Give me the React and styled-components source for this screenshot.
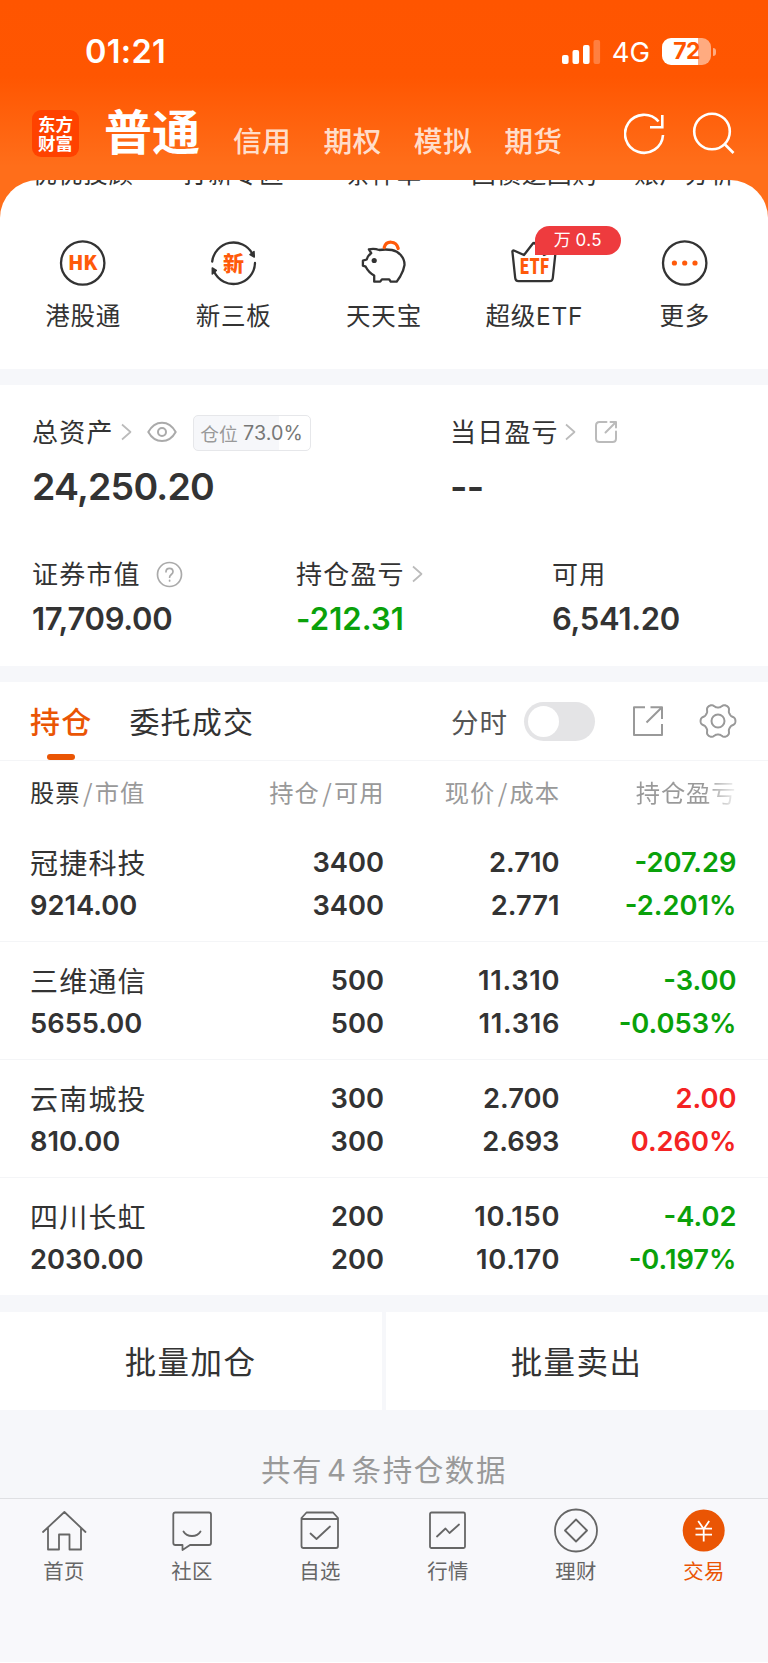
import React from "react";
import styled, { createGlobalStyle } from "styled-components";

const cjk = `"Noto Sans CJK SC", sans-serif`;

const GlobalStyle = createGlobalStyle`
  *, *::before, *::after { box-sizing: border-box; }
  html, body { margin: 0; padding: 0; background: #fff; }
  body { font-family: Inter, ${cjk}; color: #333; }
`;

const Screen = styled.div`
  width: 768px;
  height: 1663px;
  display: flex;
  flex-direction: column;
  overflow: hidden;
  background: #f6f7fa;
  white-space: nowrap;
`;

/* ---------- header ---------- */

const Header = styled.header`
  height: 222px;
  flex: none;
  background: linear-gradient(180deg, #ff5500 0, #ff5601 76px, #ff6e1a 166px);
`;

const StatusBar = styled.div`
  height: 103px;
  padding: 0 57px 0 85px;
  display: flex;
  align-items: center;
  color: #fff;
`;

const Clock = styled.span`
  flex: 1;
  font-size: 32.5px;
  font-weight: 600;
  letter-spacing: 0.3px;
`;

const Network = styled.span`
  margin: 0 12px 0 11px;
  font-size: 27.5px;
`;

const Battery = styled.div`
  position: relative;
  width: 49px;
  height: 27px;
  border-radius: 9px;
  background: linear-gradient(90deg, #fff 36px, #ffab80 36px);
  color: #ff5500;
  font-size: 23px;
  font-weight: 700;
  line-height: 27px;
  text-align: center;
  letter-spacing: -0.8px;

  &::after {
    content: "";
    position: absolute;
    right: -5px;
    top: 10px;
    width: 3px;
    height: 8px;
    border-radius: 0 3px 3px 0;
    background: #ffab80;
  }
`;

const NavRow = styled.div`
  height: 77px;
  padding: 0 32px;
  display: flex;
`;

const Logo = styled.div`
  width: 47px;
  height: 47px;
  margin: 7px 25px 0 0;
  padding-top: 3.5px;
  border-radius: 9px;
  background: #ff4200;
  color: #fff;
  font: 700 17.5px/19.5px ${cjk};
  text-align: center;
`;

const MainTab = styled.h1`
  margin: 0 33px 0 0;
  color: #fff;
  font: 700 48px/53px ${cjk};
`;

const SubTab = styled.span`
  width: 90.4px;
  padding-top: 16.5px;
  color: rgba(255, 255, 255, 0.8);
  font: 500 28.8px/40px ${cjk};
  letter-spacing: 0.3px;
`;

const HeaderIcons = styled.div`
  margin-left: auto;
  padding-top: 7px;
  display: flex;
  gap: 24px;
  color: #fff;
`;

/* ---------- shortcuts ---------- */

const Shortcuts = styled.section`
  flex: none;
  height: 189px;
  margin-top: -42px;
  border-radius: 38px 38px 0 0;
  overflow: hidden;
  background: #fff;
`;

const ShortcutGrid = styled.div`
  display: grid;
  grid-template-columns: repeat(5, 150.4px);
  justify-content: center;
  justify-items: center;
`;

const ClippedGrid = styled(ShortcutGrid)`
  height: 32px;
  margin-top: -22px;
`;

const ShortcutLabel = styled.span`
  font: 400 24.5px/32px Inter, ${cjk};
  letter-spacing: 0.8px;
`;

const Shortcut = styled.div`
  position: relative;
  width: 100%;
  padding-top: 49px;
  display: flex;
  flex-direction: column;
  align-items: center;
  gap: 13px;
`;

const PromoTag = styled.span`
  position: absolute;
  left: 75.5px;
  top: 35.5px;
  width: 86.5px;
  height: 29.5px;
  border-radius: 15px 15px 15px 0;
  background: #ee3b3e;
  color: #fff;
  font: 400 17px/29px Inter, ${cjk};
  letter-spacing: 0.5px;
  word-spacing: -1px;
  text-align: center;
`;

/* ---------- assets ---------- */

const Assets = styled.section`
  flex: none;
  height: 281px;
  margin-top: 16px;
  background: #fff;
`;

const AssetRow = styled.div`
  display: grid;
  grid-template-columns: ${(p) => p.$cols};
  padding-left: 32px;
  padding-top: ${(p) => p.$top};
`;

const AssetLabel = styled.div`
  height: 38px;
  display: flex;
  align-items: center;
  font: 400 26px/36px ${cjk};
  letter-spacing: 1.2px;
`;

const LabelText = styled.span`
  height: 38px;
`;

const AssetValue = styled.div`
  font: 600 ${(p) => (p.$large ? "37.5px/46px" : "31px/46px")} Inter, sans-serif;
  letter-spacing: ${(p) => (p.$large ? "-0.8px" : p.$down ? "0.1px" : "-0.3px")};
  margin-top: ${(p) => (p.$large ? "13px" : "2.5px")};
  color: ${(p) => (p.$down ? "#0aa10a" : "#333")};
`;

const PositionTag = styled.div`
  width: 118px;
  height: 36px;
  margin: 1px 0 0 16px;
  border: 1.5px solid #e6e7ea;
  border-radius: 5px;
  background: linear-gradient(90deg, #f6f7fa 85px, #fff 85px);
  display: flex;
  align-items: center;
  justify-content: center;
  gap: 5px;
  font: 400 18.7px/32px ${cjk};
  letter-spacing: 0.2px;
  color: #999;
`;

const PositionValue = styled.span`
  padding-top: 1px;
  font: 400 19.7px/34px Inter, sans-serif;
  letter-spacing: 0.1px;
  color: #777;
`;

/* ---------- holdings ---------- */

const Holdings = styled.section`
  flex: none;
  height: 613px;
  margin-top: 16px;
  background: #fff;
`;

const TabRow = styled.div`
  height: 79px;
  padding: 0 31px 0 30px;
  border-bottom: 1.5px solid #f4f5f7;
  display: flex;
  align-items: center;
`;

const Tab = styled.span`
  position: relative;
  height: 79px;
  margin-right: 37px;
  font: ${(p) => (p.$active ? 500 : 400)} 30px/76px ${cjk};
  letter-spacing: 1.2px;
  color: ${(p) => (p.$active ? "#ea5504" : "#333")};

  &::after {
    content: "";
    display: ${(p) => (p.$active ? "block" : "none")};
    position: absolute;
    left: 17px;
    bottom: 0.5px;
    width: 27.5px;
    height: 6px;
    border-radius: 3px;
    background: #ea5504;
  }
`;

const ToggleLabel = styled.span`
  margin-left: auto;
  font: 400 27.5px/78px ${cjk};
  letter-spacing: 1px;
  color: #555;
`;

const Toggle = styled.span`
  width: 71px;
  height: 39px;
  margin: 0 37.5px 0 15.5px;
  padding: 4px;
  border-radius: 20px;
  background: #e4e4e6;

  &::before {
    content: "";
    display: block;
    width: 31px;
    height: 31px;
    border-radius: 50%;
    background: #fff;
  }
`;

const tableColumns = "190px 164px 175.5px 176.5px";

const TableHead = styled.div`
  height: 63px;
  padding-left: 30px;
  display: grid;
  grid-template-columns: ${tableColumns};
  font: 400 24.3px/61.5px ${cjk};
  color: #999;
`;

const HeadCell = styled.div`
  letter-spacing: 0.9px;
  margin-right: -0.5px;
  text-align: ${(p) => (p.$left ? "left" : "right")};
`;

const FadedText = styled.span`
  background: linear-gradient(90deg, #999 68%, #f4f4f4 100%);
  -webkit-background-clip: text;
  background-clip: text;
  color: transparent;
`;

const Strong = styled.b`
  font-weight: 400;
  color: #333;
`;

const Slash = styled.span`
  margin: 0 1.5px 0 2.5px;
`;

const StockRow = styled.div`
  height: ${(p) => (p.$last ? "117px" : "118px")};
  padding: 18px 0 0 30px;
  border-bottom: ${(p) => (p.$last ? "0" : "1.5px solid #f4f5f7")};
  display: grid;
  grid-template-columns: ${tableColumns};
  grid-auto-rows: 42.5px;
  font: 600 27.3px/42.5px Inter, sans-serif;
`;

const StockName = styled.span`
  font: 400 28px/41px ${cjk};
  letter-spacing: 1.2px;
`;

const Num = styled.span`
  text-align: ${(p) => (p.$left ? "left" : "right")};
  letter-spacing: ${(p) => (p.$loose ? "0.7px" : "0")};
  margin-right: ${(p) => (p.$loose ? "-0.7px" : p.$tone ? "-0.5px" : "0")};
  color: ${(p) => (p.$tone === "down" ? "#0aa10a" : p.$tone === "up" ? "#f42323" : "#333")};
`;

/* ---------- footer ---------- */

const BatchActions = styled.div`
  flex: none;
  margin-top: 17px;
  display: grid;
  grid-template-columns: 1fr 1fr;
  gap: 4px;
`;

const BatchButton = styled.button`
  height: 98px;
  padding: 0 1px 2px 0;
  border: 0;
  background: #fff;
  color: #333;
  font: 400 31.5px/96px ${cjk};
  letter-spacing: 1.4px;
`;

const Summary = styled.p`
  flex: none;
  height: 88px;
  margin: 0;
  padding-top: 38.5px;
  font: 400 29.5px/42px Inter, ${cjk};
  letter-spacing: 1.6px;
  word-spacing: -6px;
  color: #999;
  text-align: center;
`;

const TabBar = styled.nav`
  flex: 1;
  border-top: 1.5px solid #dfe0e3;
  border-bottom: 1px solid #fff;
  background: #f8f8fb;
  display: grid;
  grid-template-columns: repeat(6, 1fr);
`;

const TabBarItem = styled.div`
  padding-top: 7px;
  display: flex;
  flex-direction: column;
  align-items: center;
  color: ${(p) => (p.$active ? "#ea5504" : "#666")};
  font: 400 20.4px/31px ${cjk};
  letter-spacing: 0.4px;
`;

const Glyph = styled.svg`
  display: block;
  flex: none;
  fill: none;
  stroke: ${(p) => p.$color || "currentColor"};
  stroke-width: ${(p) => p.$weight || 2};
  stroke-linejoin: round;
  stroke-linecap: ${(p) => p.$cap || "round"};
  margin-left: ${(p) => p.$ml || 0};
`;

const IconText = styled.text`
  font-family: ${cjk};
  font-weight: 900;
  fill: #ff5a0a;
  stroke: none;
  text-anchor: middle;
`;

/* ---------- icons ---------- */

const Signal = () => (
  <svg width="39" height="24" viewBox="0 0 39 24" fill="#fff">
    <rect x="0" y="15" width="6.6" height="9" rx="2" />
    <rect x="10.5" y="10" width="6.6" height="14" rx="2" />
    <rect x="21" y="5" width="6.6" height="19" rx="2" />
    <rect x="31.5" y="0" width="6.6" height="24" rx="2" opacity=".25" />
  </svg>
);

const Refresh = () => (
  <Glyph width="44" height="46" viewBox="0 0 44 46" $weight={2.6} $cap="butt">
    <path d="M39 25A19 19 0 1 1 34.5 11.500" />
    <path d="M38.300 5v12.200H26" strokeLinejoin="miter" />
  </Glyph>
);

const Search = () => (
  <Glyph width="44" height="46" viewBox="0 0 44 46" $weight={2.6} $cap="butt">
    <circle cx="20" cy="21.5" r="17.8" />
    <path d="M32.5 34l9 9" />
  </Glyph>
);

const Chevron = ({ ml }) => (
  <Glyph width="11" height="18" viewBox="0 0 11 18" $color="#bbb" $weight={1.7} $cap="butt" $ml={ml}>
    <path d="M1 1.5l8.5 7.5L1 16.5" />
  </Glyph>
);

const Eye = () => (
  <Glyph width="30" height="22" viewBox="0 0 30 22" $color="#aaa" $ml="15px">
    <path d="M1.3 11C8 -1.5 22 -1.5 28.7 11C22 23 8 23 1.3 11Z" />
    <circle cx="15" cy="11" r="4" />
  </Glyph>
);

const Question = () => (
  <Glyph width="27" height="27" viewBox="0 0 27 27" $color="#aaa" $weight={1.7} $ml="15px">
    <circle cx="13.5" cy="13.5" r="12" />
    <path d="M10 10.8c0-4.6 7-4.6 7 0c0 2.6-3.4 2.8-3.4 5.4" />
    <path d="M13.6 19.3v.6" />
  </Glyph>
);

const ShareSmall = () => (
  <Glyph width="24" height="24" viewBox="0 0 24 24" $color="#bbb" $ml="17.5px">
    <path d="M12.5 2H5.5Q2 2 2 5.5V18.5Q2 22 5.5 22H18.5Q22 22 22 18.5V11.5" />
    <path d="M11.5 12.5L22 2M16.5 2H22V7.5" />
  </Glyph>
);

const ShareSquare = () => (
  <Glyph width="32" height="32" viewBox="0 0 32 32" $color="#999" $cap="butt">
    <path d="M13 2.2H2V30H30V19M18.5 2.2H30V14M30 2.2L14.5 17.5" />
  </Glyph>
);

const gearOutline = Array.from({ length: 120 }, (_, i) => {
  const t = (i / 120) * Math.PI * 2;
  const r = 15.5 + 2.1 * Math.tanh(1.5 * Math.cos(6 * t));
  return `${(19 + r * Math.cos(t)).toFixed(2)},${(19 + r * Math.sin(t)).toFixed(2)}`;
}).join(" ");

const Gear = () => (
  <Glyph width="38" height="38" viewBox="0 0 38 38" $color="#999" $ml="35px">
    <polygon points={gearOutline} />
    <circle cx="19" cy="19" r="6.5" />
  </Glyph>
);

const shortcutIcons = {
  hk: (
    <>
      <circle cx="23.7" cy="24" r="21.7" />
      <IconText x="23.7" y="31" fontSize="20">HK</IconText>
    </>
  ),
  board: (
    <>
      <path d="M2.2 22.5A21.5 21.5 0 0 1 42.3 14.5M45 24A21.5 21.5 0 0 1 4 32.5" />
      <path d="M44 12.500L44.300 18L40 15.500Z M2.300 35L2.300 29L6.300 31.500Z" fill="#333" strokeWidth="1.5" />
      <IconText x="23.5" y="31.500" fontSize="21">新</IconText>
    </>
  ),
  pig: (
    <g transform="translate(-0.8 0)">
      <path d="M9.7 10.3Q15 9 20 11Q26 10 32.7 11Q38 12 41.5 16Q45.5 20.5 45.3 26Q44.5 31.5 41 37.5L37.5 42.7H31.5L30 40.3H22.7L21 42.7H15V36.5Q9.5 33.5 6.5 27.7L3.7 26.7V21.7L7.5 20.5Q8.5 16.5 12 14.2Z" />
      <path d="M25 8.5C27 1.3 37 1.3 39 9.5" stroke="#ff5a0a" strokeWidth="3.2" />
      <circle cx="15" cy="21.5" r="2.6" fill="#333" stroke="none" />
    </g>
  ),
  etf: (
    <>
      <path d="M2.5 13.5Q1.8 10.5 5 12L14 16L22.5 5Q24 3 25.5 5L34 16L43 12Q46.2 10.5 45.5 13.5L42.8 39Q42.5 42.2 39.5 42.2H8.5Q5.5 42.2 5.2 39Z" />
      <IconText x="24.5" y="35" fontSize="20.5" textLength="30" lengthAdjust="spacingAndGlyphs">ETF</IconText>
    </>
  ),
  more: (
    <>
      <circle cx="23.7" cy="24" r="21.7" />
      <g fill="#ff5a0a" stroke="none">
        <circle cx="13.4" cy="24" r="2.6" />
        <circle cx="23.7" cy="24" r="2.6" />
        <circle cx="34" cy="24" r="2.6" />
      </g>
    </>
  ),
};

const tabBarIcons = {
  home: <path d="M3 26L24.4 6L45.5 26M8 22V43.5H19V28.5H29.5V43.5H41V22" />,
  chat: (
    <>
      <path d="M7.3 6.5H41Q43 6.5 43 8.5V37Q43 39 41 39H22L14.5 44V39H7.3Q5.3 39 5.3 37V8.5Q5.3 6.5 7.3 6.5Z" />
      <path d="M15.5 25.5C19 31.5 29 31.5 32.5 25.5" />
    </>
  ),
  pick: (
    <>
      <path d="M5.5 13H42V40Q42 42 40 42H7.5Q5.5 42 5.5 40V12L10.5 6.5H37L42 12V14" />
      <path d="M14.5 27.5L20.5 33L34 20.5" />
    </>
  ),
  quote: (
    <>
      <rect x="6" y="6.5" width="35" height="35.5" rx="1.5" />
      <path d="M13 30.5L21.5 22.5L25.5 27L35 18.5" />
    </>
  ),
  wealth: (
    <>
      <circle cx="24" cy="24.5" r="21" />
      <path d="M24 13.5L35 24.5L24 35.5L13 24.5Z" />
    </>
  ),
  trade: (
    <>
      <circle cx="23.7" cy="24.5" r="21" fill="#ea5504" stroke="none" />
      <path d="M18.2 15L23.7 23L29.2 15M23.7 22.5V35.5M15.5 22.7H32M15.5 28.7H32" stroke="#fff" strokeLinecap="butt" />
    </>
  ),
};

/* ---------- data ---------- */

const clippedLabels = ["优优投顾", "打新专区", "条件单", "国债逆回购", "账户分析"];

const shortcuts = [
  { icon: "hk", label: "港股通" },
  { icon: "board", label: "新三板" },
  { icon: "pig", label: "天天宝" },
  { icon: "etf", label: "超级ETF", tag: "万 0.5" },
  { icon: "more", label: "更多" },
];

const stocks = [
  { name: "冠捷科技", value: "9214.00", held: "3400", free: "3400", price: "2.710", cost: "2.771", pl: "-207.29", rate: "-2.201%", tone: "down" },
  { name: "三维通信", value: "5655.00", held: "500", free: "500", price: "11.310", cost: "11.316", pl: "-3.00", rate: "-0.053%", tone: "down" },
  { name: "云南城投", value: "810.00", held: "300", free: "300", price: "2.700", cost: "2.693", pl: "2.00", rate: "0.260%", tone: "up" },
  { name: "四川长虹", value: "2030.00", held: "200", free: "200", price: "10.150", cost: "10.170", pl: "-4.02", rate: "-0.197%", tone: "down" },
];

const tabs = [
  { icon: "home", label: "首页" },
  { icon: "chat", label: "社区" },
  { icon: "pick", label: "自选" },
  { icon: "quote", label: "行情" },
  { icon: "wealth", label: "理财" },
  { icon: "trade", label: "交易", active: true },
];

export default function App() {
  return (
    <>
      <GlobalStyle />
      <Screen>
        <Header>
          <StatusBar>
            <Clock>01:21</Clock>
            <Signal />
            <Network>4G</Network>
            <Battery>72</Battery>
          </StatusBar>
          <NavRow>
            <Logo>东方<br />财富</Logo>
            <MainTab>普通</MainTab>
            {["信用", "期权", "模拟", "期货"].map((t) => <SubTab key={t}>{t}</SubTab>)}
            <HeaderIcons>
              <Refresh />
              <Search />
            </HeaderIcons>
          </NavRow>
        </Header>

        <Shortcuts>
          <ClippedGrid>
            {clippedLabels.map((t) => <ShortcutLabel key={t}>{t}</ShortcutLabel>)}
          </ClippedGrid>
          <ShortcutGrid>
            {shortcuts.map((s) => (
              <Shortcut key={s.label}>
                <Glyph width="48" height="48" viewBox="0 0 48 48" $color="#333" $weight={2.3}>
                  {shortcutIcons[s.icon]}
                </Glyph>
                <ShortcutLabel>{s.label}</ShortcutLabel>
                {s.tag && <PromoTag>{s.tag}</PromoTag>}
              </Shortcut>
            ))}
          </ShortcutGrid>
        </Shortcuts>

        <Assets>
          <AssetRow $cols="418px 1fr" $top="28px">
            <div>
              <AssetLabel>
                <LabelText>总资产</LabelText><Chevron ml="7px" /><Eye />
                <PositionTag>仓位<PositionValue>73.0%</PositionValue></PositionTag>
              </AssetLabel>
              <AssetValue $large>24,250.20</AssetValue>
            </div>
            <div>
              <AssetLabel><LabelText>当日盈亏</LabelText><Chevron ml="6.5px" /><ShareSmall /></AssetLabel>
              <AssetValue $large>--</AssetValue>
            </div>
          </AssetRow>
          <AssetRow $cols="264px 256px 1fr" $top="45px">
            <div>
              <AssetLabel><LabelText>证券市值</LabelText><Question /></AssetLabel>
              <AssetValue>17,709.00</AssetValue>
            </div>
            <div>
              <AssetLabel><LabelText>持仓盈亏</LabelText><Chevron ml="7px" /></AssetLabel>
              <AssetValue $down>-212.31</AssetValue>
            </div>
            <div>
              <AssetLabel><LabelText>可用</LabelText></AssetLabel>
              <AssetValue>6,541.20</AssetValue>
            </div>
          </AssetRow>
        </Assets>

        <Holdings>
          <TabRow>
            <Tab $active>持仓</Tab>
            <Tab>委托成交</Tab>
            <ToggleLabel>分时</ToggleLabel>
            <Toggle />
            <ShareSquare />
            <Gear />
          </TabRow>
          <TableHead>
            <HeadCell $left><Strong>股票</Strong><Slash>/</Slash>市值</HeadCell>
            <HeadCell>持仓<Slash>/</Slash>可用</HeadCell>
            <HeadCell>现价<Slash>/</Slash>成本</HeadCell>
            <HeadCell><FadedText>持仓盈亏</FadedText></HeadCell>
          </TableHead>
          {stocks.map((s, i) => (
            <StockRow key={s.name} $last={i === stocks.length - 1}>
              <StockName>{s.name}</StockName>
              <Num>{s.held}</Num>
              <Num $loose={s.price.startsWith("1")}>{s.price}</Num>
              <Num $tone={s.tone}>{s.pl}</Num>
              <Num $left>{s.value}</Num>
              <Num>{s.free}</Num>
              <Num $loose={s.cost.startsWith("1")}>{s.cost}</Num>
              <Num $tone={s.tone}>{s.rate}</Num>
            </StockRow>
          ))}
        </Holdings>

        <BatchActions>
          <BatchButton>批量加仓</BatchButton>
          <BatchButton>批量卖出</BatchButton>
        </BatchActions>

        <Summary>共有 4 条持仓数据</Summary>

        <TabBar>
          {tabs.map((t) => (
            <TabBarItem key={t.label} $active={t.active}>
              <Glyph width="48" height="49" viewBox="0 0 48 49" $weight={1.8}>
                {tabBarIcons[t.icon]}
              </Glyph>
              {t.label}
            </TabBarItem>
          ))}
        </TabBar>
      </Screen>
    </>
  );
}
